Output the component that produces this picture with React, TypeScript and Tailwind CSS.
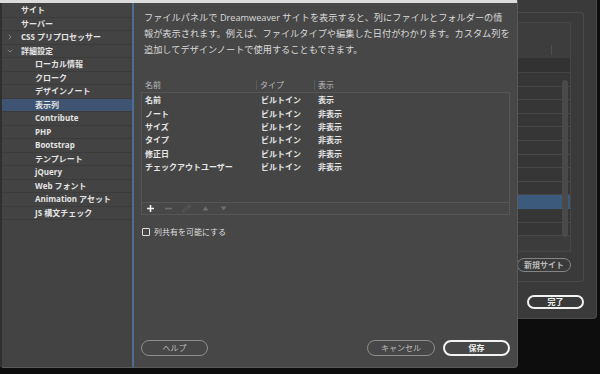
import { ChevronDown, ChevronRight, Pencil } from "lucide-react";

const navItems = [
  { label: "サイト", level: 0 },
  { label: "サーバー", level: 0 },
  { label: "CSS プリプロセッサー", level: 0, chevron: "right" },
  { label: "詳細設定", level: 0, chevron: "down" },
  { label: "ローカル情報", level: 1 },
  { label: "クローク", level: 1 },
  { label: "デザインノート", level: 1 },
  { label: "表示列", level: 1, active: true },
  { label: "Contribute", level: 1 },
  { label: "PHP", level: 1 },
  { label: "Bootstrap", level: 1 },
  { label: "テンプレート", level: 1 },
  { label: "jQuery", level: 1 },
  { label: "Web フォント", level: 1 },
  { label: "Animation アセット", level: 1 },
  { label: "JS 構文チェック", level: 1 },
];

const columns = [
  { name: "名前", type: "ビルトイン", shown: "表示" },
  { name: "ノート", type: "ビルトイン", shown: "非表示" },
  { name: "サイズ", type: "ビルトイン", shown: "非表示" },
  { name: "タイプ", type: "ビルトイン", shown: "非表示" },
  { name: "修正日", type: "ビルトイン", shown: "非表示" },
  { name: "チェックアウトユーザー", type: "ビルトイン", shown: "非表示" },
];

function PillButton({ label, primary = false, className = "" }: { label: string; primary?: boolean; className?: string }) {
  return (
    <button
      type="button"
      className={
        "flex h-[16px] items-center justify-center rounded-full text-[8px] leading-none " +
        (primary
          ? "border-2 border-[#f2f2f2] font-bold text-[#f2f2f2] "
          : "border-[1.5px] border-[#8e8e8e] text-[#bdbdbd] ") +
        className
      }
    >
      {label}
    </button>
  );
}

function Sidebar() {
  return (
    <aside className="flex w-[134px] shrink-0 flex-col border-l-2 border-r-2 border-l-[#2f2f2f] border-r-[#4d6d92] bg-[#434343] pt-[1px]">
      {navItems.map((item) => (
        <div
          key={item.label}
          className={
            "relative flex h-[13.5px] items-center border-b border-[#3b3b3b] text-[8px] font-bold leading-none text-[#e4e4e4] " +
            (item.active ? "bg-[#3e5472] " : "") +
            (item.level === 0 ? "pl-[19px]" : "pl-[33px]")
          }
        >
          {item.chevron === "right" && (
            <ChevronRight size={8} strokeWidth={1.6} className="absolute left-[4px] text-[#bdbdbd]" />
          )}
          {item.chevron === "down" && (
            <ChevronDown size={8} strokeWidth={1.6} className="absolute left-[4px] text-[#bdbdbd]" />
          )}
          {item.label}
        </div>
      ))}
    </aside>
  );
}

function ColumnsTable() {
  return (
    <div className="mt-[20px] flex flex-col">
      <div className="flex h-[14px] items-center text-[8px] leading-none text-[#bcbcbc]">
        <div className="w-[115px] pl-[4px]">名前</div>
        <div className="flex w-[58px] items-center">
          <span className="h-[10px] w-px bg-[#5a5a5a]" />
          <span className="pl-[3px]">タイプ</span>
        </div>
        <div className="flex flex-1 items-center">
          <span className="h-[10px] w-px bg-[#5a5a5a]" />
          <span className="pl-[3px]">表示</span>
        </div>
      </div>
      <div className="flex h-[111px] flex-col border border-[#565656] bg-[#454545] pt-[0.5px]">
        {columns.map((c) => (
          <div
            key={c.name}
            className="flex h-[13.4px] items-center text-[8px] font-bold leading-none text-[#e6e6e6]"
          >
            <div className="w-[115px] pl-[3px]">{c.name}</div>
            <div className="w-[58px] pl-[4px]">{c.type}</div>
            <div className="pl-[3px]">{c.shown}</div>
          </div>
        ))}
      </div>
      <div className="flex h-[12px] items-center border border-t-0 border-[#565656] pl-[4px]">
        <svg width="9" height="9" viewBox="0 0 9 9" className="mr-[9px]">
          <path d="M4.5 1v7M1 4.5h7" stroke="#f0f0f0" strokeWidth="1.6" />
        </svg>
        <svg width="9" height="9" viewBox="0 0 9 9" className="mr-[9px]">
          <path d="M1 4.5h7" stroke="#6e6e6e" strokeWidth="1.6" />
        </svg>
        <Pencil size={9} strokeWidth={1.5} className="mr-[11px] text-[#6a6a6a]" />
        <svg width="7" height="5" viewBox="0 0 7 5" className="mr-[11px]">
          <path d="M3.5 0.5L6.5 4.5H0.5Z" fill="#6e6e6e" />
        </svg>
        <svg width="7" height="5" viewBox="0 0 7 5">
          <path d="M0.5 0.5H6.5L3.5 4.5Z" fill="#6e6e6e" />
        </svg>
      </div>
    </div>
  );
}

function Dialog() {
  return (
    <div className="absolute left-0 top-0 flex h-[368px] w-[518px] flex-col overflow-hidden rounded-b-[4px] border-b border-r border-[#5a5a5a] bg-[#474747]">
      <div className="h-[3px] shrink-0 bg-[#dcdcdc]" />
      <div className="flex min-h-0 flex-1">
        <Sidebar />
        <section className="flex flex-1 flex-col px-[7px] pb-[11px] pt-[7px]">
          <p className="pl-[3px] text-[9.2px] leading-[16px] text-[#d9d9d9]">
            <span className="block">ファイルパネルで Dreamweaver サイトを表示すると、列にファイルとフォルダーの情</span>
            <span className="block">報が表示されます。例えば、ファイルタイプや編集した日付がわかります。カスタム列を</span>
            <span className="block">追加してデザインノートで使用することもできます。</span>
          </p>
          <ColumnsTable />
          <label className="mt-[13px] flex items-center gap-[4px] pl-[1px] text-[8px] leading-none text-[#dedede]">
            <span className="h-[8px] w-[8px] rounded-[1px] border-[1.5px] border-[#e0e0e0]" />
            列共有を可能にする
          </label>
          <div className="mt-auto flex items-center">
            <PillButton label="ヘルプ" className="w-[67px]" />
            <div className="ml-auto flex gap-[8px]">
              <PillButton label="キャンセル" className="w-[68px]" />
              <PillButton label="保存" primary className="w-[67px]" />
            </div>
          </div>
        </section>
      </div>
    </div>
  );
}

function BackWindow() {
  const rows = Array.from({ length: 12 });
  return (
    <div className="absolute left-[420px] top-0 flex h-[319px] w-[177px] flex-col items-end rounded-br-[4px] border-b border-r border-[#494949] bg-[#3a3a3a] pr-[12px] pt-[12px]">
      <div className="flex h-[270px] w-[160px] flex-col items-end rounded-[3px] border border-[#4a4a4a] pr-[12px] pt-[9px]">
        <div className="relative flex h-[230px] w-[140px] flex-col border border-[#464646] bg-[#3c3c3c]">
          <div className="flex h-[35px] items-end justify-end bg-[#3d3d3d] pb-[3px] pr-[18px]">
            <span className="h-[10px] w-px bg-[#4e4e4e]" />
          </div>
          <div className="h-[15px] border-b border-[#454545] bg-[#323232]" />
          {rows.map((_, i) => (
            <div
              key={i}
              className={
                "h-[13.6px] border-b " +
                (i === 9 ? "border-[#3c5a7c] bg-[#3c5a7c]" : "border-[#474747] bg-[#363636]")
              }
            />
          ))}
          <div className="absolute right-[2px] top-[57px] h-[157px] w-[6px] rounded-full bg-[#4a4a4a]" />
        </div>
        <button
          type="button"
          className="mt-[6px] flex h-[14px] w-[54px] items-center justify-center rounded-full border-[1.5px] border-[#858585] text-[8px] font-bold leading-none text-[#bcbcbc]"
        >
          新規サイト
        </button>
      </div>
      <button
        type="button"
        className="mt-[13px] flex h-[14px] w-[57px] items-center justify-center rounded-full border-2 border-[#f2f2f2] text-[8px] font-bold leading-none text-[#f2f2f2]"
      >
        完了
      </button>
    </div>
  );
}

export default function App() {
  return (
    <div className="relative h-[374px] w-[600px] overflow-hidden bg-[#0d0d0d] font-['Open_Sans','Noto_Sans_CJK_JP',sans-serif]">
      <BackWindow />
      <Dialog />
    </div>
  );
}
